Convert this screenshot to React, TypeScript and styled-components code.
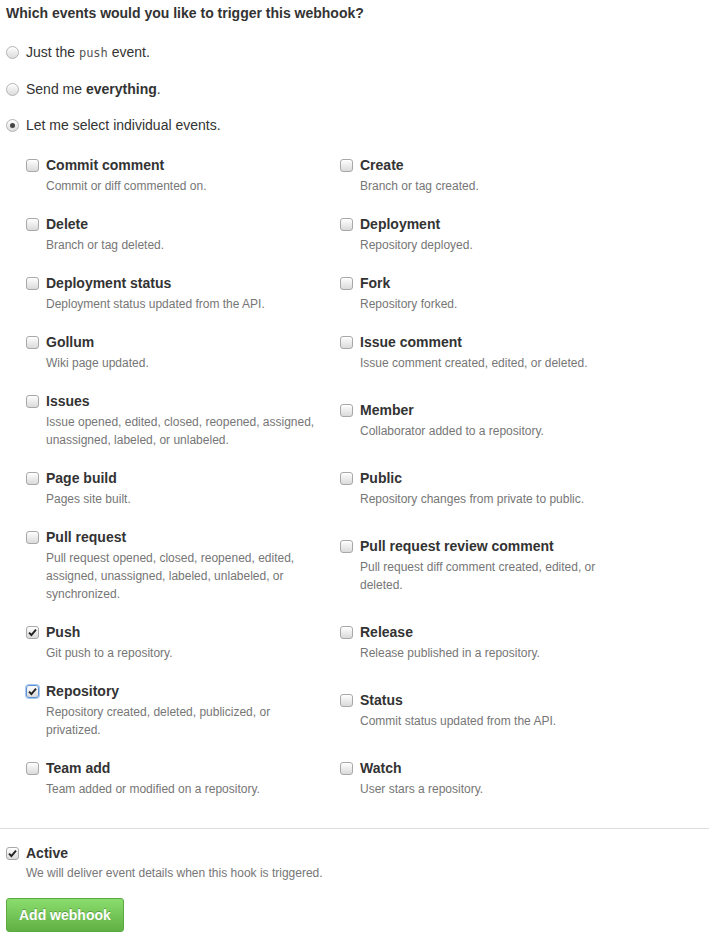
import { FC } from 'react';
import styled, { createGlobalStyle } from 'styled-components';

const GlobalStyle = createGlobalStyle`
	body {
		margin: 0;
		background: #fff;
		font-family: "Liberation Sans", Helvetica, Arial, sans-serif;
		font-size: 14px;
		color: #333;
	}
`;

type EventItem = { title: string; note: string; checked?: boolean; focused?: boolean };

const events: [EventItem, EventItem][] = [
	[
		{ title: 'Commit comment', note: 'Commit or diff commented on.' },
		{ title: 'Create', note: 'Branch or tag created.' },
	],
	[
		{ title: 'Delete', note: 'Branch or tag deleted.' },
		{ title: 'Deployment', note: 'Repository deployed.' },
	],
	[
		{ title: 'Deployment status', note: 'Deployment status updated from the API.' },
		{ title: 'Fork', note: 'Repository forked.' },
	],
	[
		{ title: 'Gollum', note: 'Wiki page updated.' },
		{ title: 'Issue comment', note: 'Issue comment created, edited, or deleted.' },
	],
	[
		{ title: 'Issues', note: 'Issue opened, edited, closed, reopened, assigned, unassigned, labeled, or unlabeled.' },
		{ title: 'Member', note: 'Collaborator added to a repository.' },
	],
	[
		{ title: 'Page build', note: 'Pages site built.' },
		{ title: 'Public', note: 'Repository changes from private to public.' },
	],
	[
		{ title: 'Pull request', note: 'Pull request opened, closed, reopened, edited, assigned, unassigned, labeled, unlabeled, or synchronized.' },
		{ title: 'Pull request review comment', note: 'Pull request diff comment created, edited, or deleted.' },
	],
	[
		{ title: 'Push', note: 'Git push to a repository.', checked: true },
		{ title: 'Release', note: 'Release published in a repository.' },
	],
	[
		{ title: 'Repository', note: 'Repository created, deleted, publicized, or privatized.', checked: true, focused: true },
		{ title: 'Status', note: 'Commit status updated from the API.' },
	],
	[
		{ title: 'Team add', note: 'Team added or modified on a repository.' },
		{ title: 'Watch', note: 'User stars a repository.' },
	],
];

const Checkbox: FC<{ checked?: boolean; focused?: boolean }> = ({ checked, focused }) => (
	<Box $focused={focused}>
		{checked && (
			<svg width="9" height="9" viewBox="0 0 9 9">
				<path d="M1 4.6 L3.4 7 L8 1.6" fill="none" stroke="#222" strokeWidth="1.9" />
			</svg>
		)}
	</Box>
);

const EventOption: FC<{ item: EventItem }> = ({ item }) => (
	<Option>
		<Checkbox checked={item.checked} focused={item.focused} />
		<div>
			<OptionTitle>{item.title}</OptionTitle>
			<Note>{item.note}</Note>
		</div>
	</Option>
);

export default function App() {
	return (
		<>
			<GlobalStyle />
			<Section>
				<Heading>Which events would you like to trigger this webhook?</Heading>
				<RadioList>
					<RadioRow>
						<Radio />
						<span>
							Just the <Code>push</Code> event.
						</span>
					</RadioRow>
					<RadioRow>
						<Radio />
						<span>
							Send me <b>everything</b>.
						</span>
					</RadioRow>
					<RadioRow>
						<Radio $selected />
						<span>Let me select individual events.</span>
					</RadioRow>
				</RadioList>
				<EventGrid>
					{events.flat().map((item) => (
						<EventOption key={item.title} item={item} />
					))}
				</EventGrid>
			</Section>
			<Divider />
			<Section>
				<ActiveOption>
					<Checkbox checked />
					<div>
						<OptionTitle>Active</OptionTitle>
						<ActiveNote>We will deliver event details when this hook is triggered.</ActiveNote>
					</div>
				</ActiveOption>
				<SubmitButton type="button">Add webhook</SubmitButton>
			</Section>
		</>
	);
}

const Section = styled.div`
	padding: 3px 6px 0;
`;

const Heading = styled.h3`
	margin: 0;
	font-size: 14px;
	line-height: 20px;
	font-weight: bold;
	color: #333;
`;

const RadioList = styled.div`
	display: flex;
	flex-direction: column;
	gap: 16px;
	margin-top: 19px;
`;

const RadioRow = styled.label`
	display: flex;
	align-items: center;
	gap: 7px;
	line-height: 20px;
	font-size: 14px;
	color: #333;
`;

const Radio = styled.span<{ $selected?: boolean }>`
	position: relative;
	width: 11px;
	height: 11px;
	border-radius: 50%;
	border: 1px solid #b3b3b3;
	background: linear-gradient(#fdfdfd, #dcdcdc);
	box-shadow: inset 0 1px 0 #fff;
	flex: none;

	&::after {
		content: '';
		display: ${(p) => (p.$selected ? 'block' : 'none')};
		position: absolute;
		left: 3px;
		top: 3px;
		width: 5px;
		height: 5px;
		border-radius: 50%;
		background: #444;
	}
`;

const Code = styled.code`
	font-family: "DejaVu Sans Mono", "Liberation Mono", monospace;
	font-size: 12px;
	color: #555;
`;

const EventGrid = styled.div`
	display: grid;
	grid-template-columns: 314px 314px;
	align-items: center;
	row-gap: 19px;
	margin-top: 20px;
	padding-left: 20px;
	padding-bottom: 30px;
`;

const Option = styled.div`
	display: flex;
	align-items: flex-start;
	gap: 7px;
	padding-right: 20px;
`;

const ActiveOption = styled(Option)`
	padding-top: 11px;
`;

const Box = styled.span<{ $focused?: boolean }>`
	display: flex;
	align-items: center;
	justify-content: center;
	width: 11px;
	height: 11px;
	margin-top: 4px;
	flex: none;
	border-radius: 3px;
	border: 1px solid ${(p) => (p.$focused ? '#5b8fd6' : '#a8a8a8')};
	background: linear-gradient(#fefefe, #dadada);
	box-shadow: ${(p) => (p.$focused ? '0 0 0 1px #a9c8f0' : 'inset 0 1px 0 #fff')};
`;

const OptionTitle = styled.div`
	font-size: 14px;
	line-height: 20px;
	font-weight: bold;
	color: #333;
`;

const Note = styled.p`
	margin: 2px 0 0;
	font-size: 12px;
	line-height: 18px;
	color: #767676;
`;

const ActiveNote = styled(Note)`
	margin-top: 1px;
`;

const Divider = styled.hr`
	margin: 0;
	border: 0;
	border-top: 1px solid #ddd;
`;

const SubmitButton = styled.button`
	margin-top: 16px;
	padding: 6px 12px;
	font-family: inherit;
	font-size: 14px;
	line-height: 20px;
	font-weight: bold;
	color: #fff;
	text-shadow: 0 -1px 0 rgba(0, 0, 0, 0.25);
	border: 1px solid #5ca941;
	border-radius: 3px;
	background: linear-gradient(#8add6d, #60b044);
	cursor: pointer;
`;
